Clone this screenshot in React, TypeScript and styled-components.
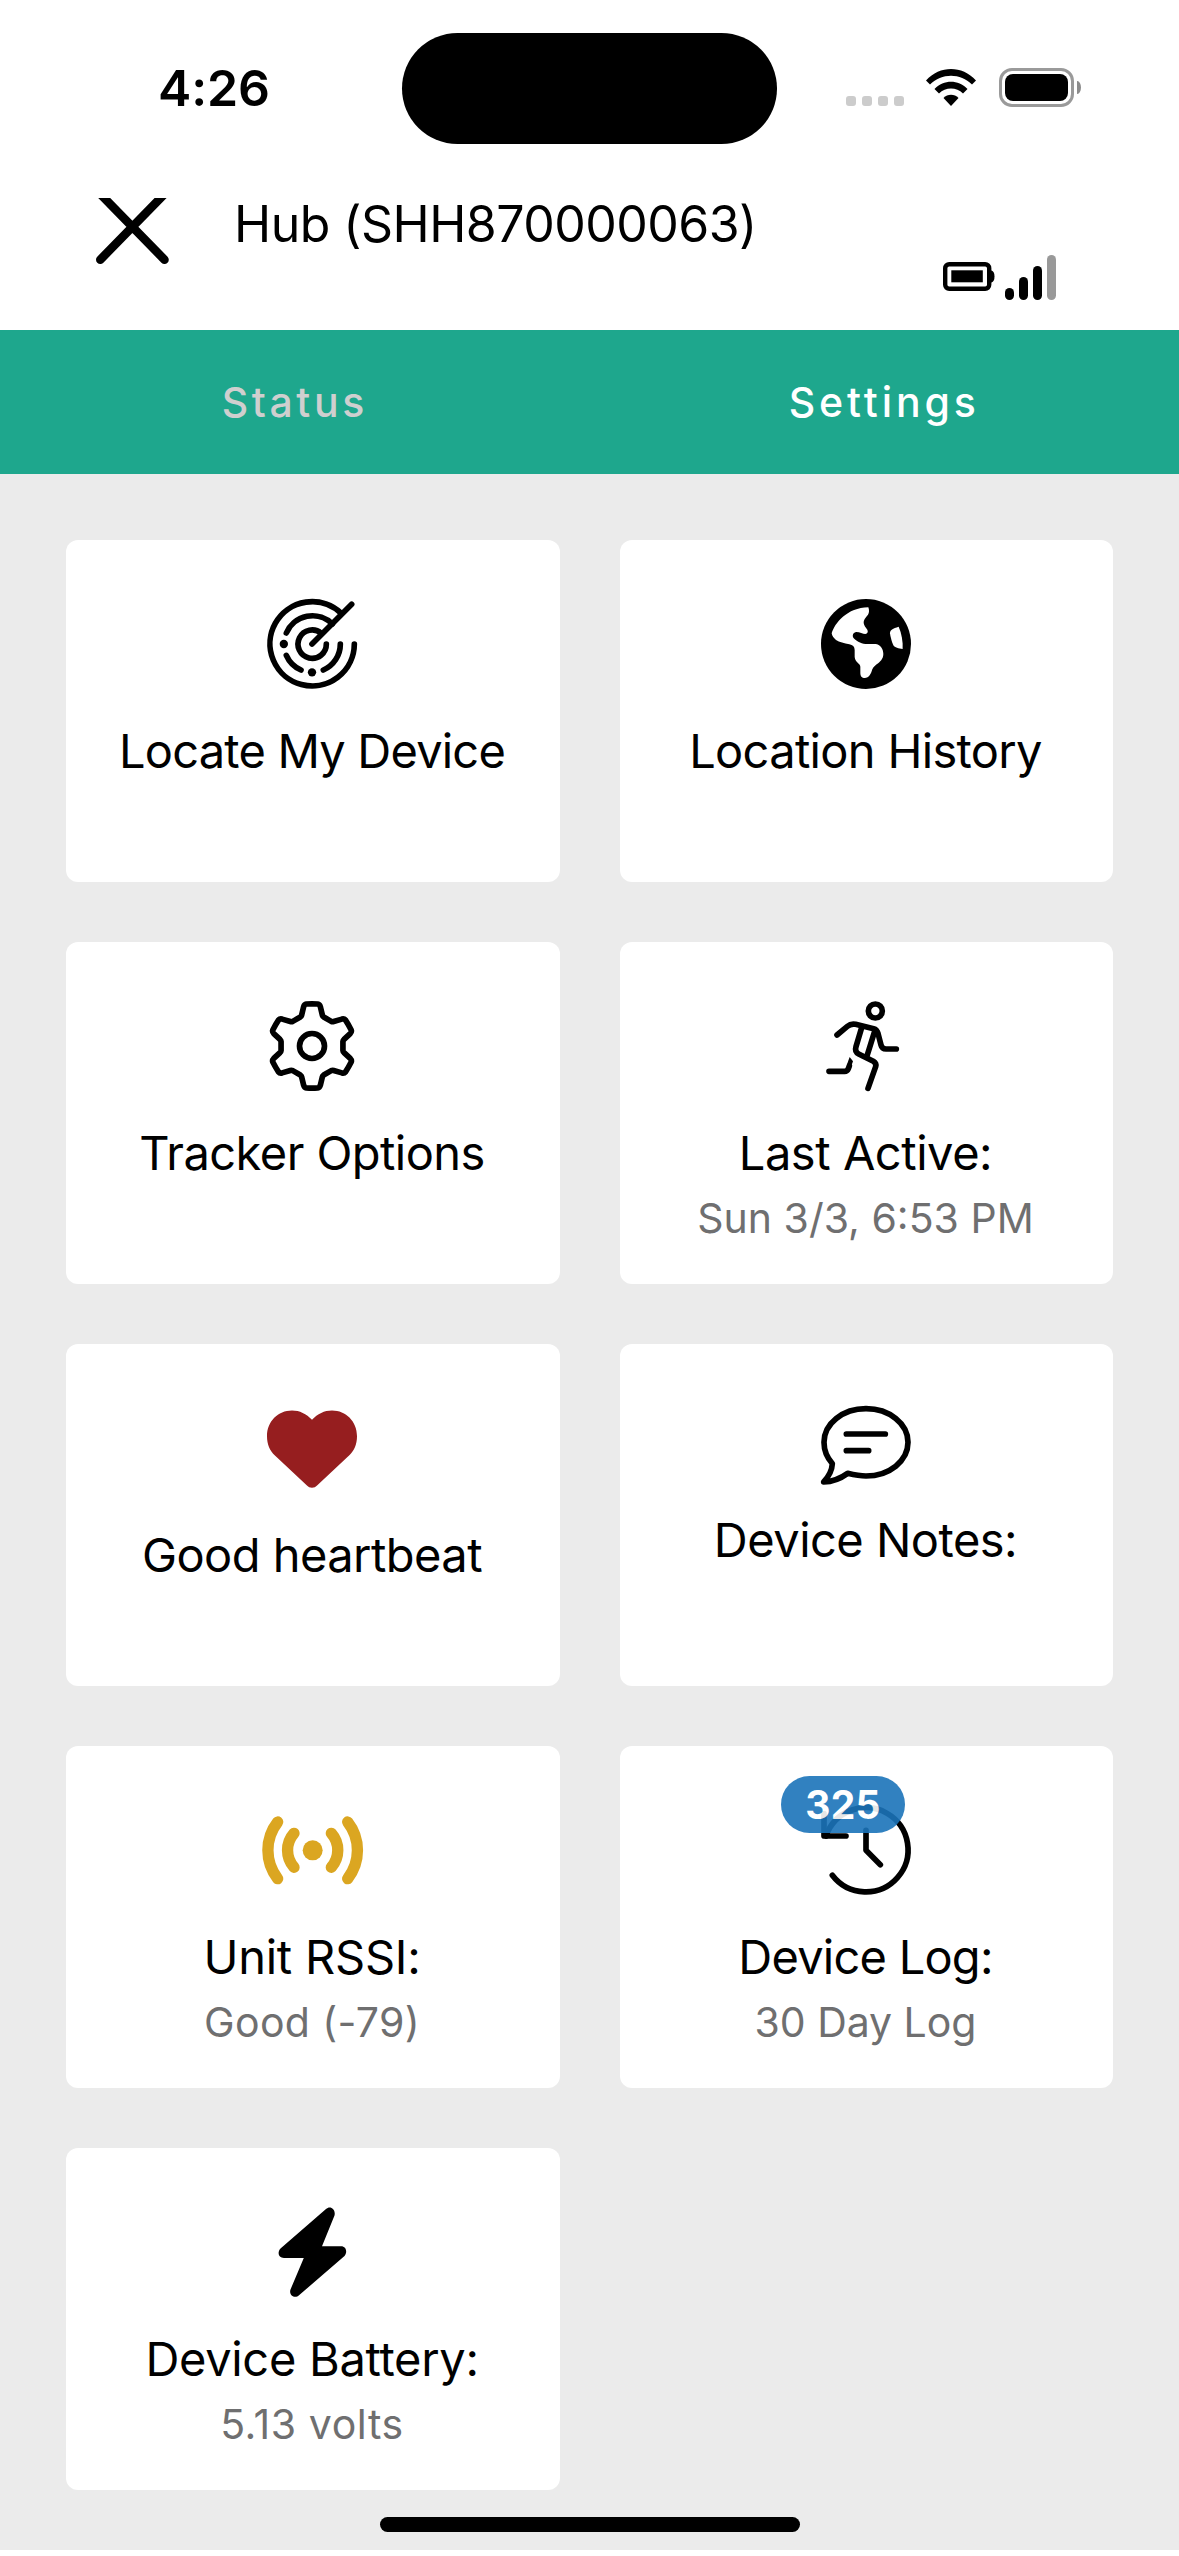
import React from "react";
import styled, { createGlobalStyle } from "styled-components";

const GlobalStyle = createGlobalStyle`
  *, *::before, *::after { box-sizing: border-box; }
  body { margin: 0; background: #fff; }
`;

const Screen = styled.div`
  display: flex;
  flex-direction: column;
  width: 1179px;
  height: 2556px;
  overflow: hidden;
  background: #fff;
  color: #000;
  font-family: Inter, "Liberation Sans", sans-serif;
`;

/* ---------- system status bar ---------- */

const StatusBar = styled.div`
  display: grid;
  grid-template-columns: 402px 375px 402px;
  flex: none;
  height: 177px;
`;

const Clock = styled.div`
  padding: 58px 0 0 158px;
  font-size: 50px;
  font-weight: 600;
  line-height: 60px;
  letter-spacing: -0.17px;
`;

const Island = styled.div`
  height: 111px;
  margin-top: 33px;
  border-radius: 56px;
  background: #000;
`;

const SystemIcons = styled.div`
  display: flex;
  align-items: flex-end;
  height: 107px;
  padding-left: 69px;
`;

const CellDots = styled.div`
  display: flex;
  gap: 6px;
  margin: 0 22px 1px 0;
`;

const CellDot = styled.span`
  width: 10px;
  height: 10px;
  border-radius: 3px;
  background: #ccc;
`;

const WifiSvg = styled.svg`
  display: block;
  margin: 0 23px 1px 0;
`;

const PhoneBattery = styled.div`
  width: 75px;
  height: 39px;
  padding: 3px;
  border: 3px solid #9a9a9a;
  border-radius: 13px;
`;

const PhoneBatteryLevel = styled.div`
  height: 27px;
  border-radius: 8px;
  background: #000;
`;

const PhoneBatteryNub = styled.div`
  width: 4px;
  height: 13px;
  margin: 0 0 13px 3px;
  border-radius: 0 4px 4px 0 / 0 7px 7px 0;
  background: #8c8c8c;
`;

/* ---------- app header ---------- */

const Header = styled.header`
  display: flex;
  align-items: flex-start;
  flex: none;
  height: 153px;
  padding: 0 123px 0 96px;
`;

const CloseButton = styled.button`
  width: 73px;
  height: 66px;
  margin: 21px 65px 0 0;
  padding: 0;
  border: 0;
  background: none;
`;

const HeaderTitle = styled.h1`
  margin: 17px 0 0;
  font-size: 50px;
  font-weight: 400;
  line-height: 60px;
  letter-spacing: -0.53px;
`;

const DeviceIndicators = styled.div`
  display: flex;
  align-items: flex-end;
  gap: 10px;
  height: 45px;
  margin: 78px 0 0 auto;
`;

const BatterySvg = styled.svg`
  display: block;
  margin-bottom: 9px;
`;

const SignalBars = styled.div`
  display: flex;
  align-items: flex-end;
  gap: 5px;
`;

const SignalBar = styled.span<{ $height: number; $off?: boolean }>`
  width: 9px;
  height: ${(p) => p.$height}px;
  border-radius: 4.5px;
  background: ${(p) => (p.$off ? "#999" : "#000")};
`;

/* ---------- tabs ---------- */

const Tabs = styled.nav`
  display: grid;
  grid-template-columns: 1fr 1fr;
  flex: none;
  height: 144px;
  background: #1ea78d;
`;

const Tab = styled.button<{ $active?: boolean; $tracking: number }>`
  padding: 0;
  border: 0;
  background: none;
  color: ${(p) => (p.$active ? "#fff" : "#cfcfcf")};
  font-family: inherit;
  font-size: 41px;
  font-weight: 500;
  line-height: 58px;
  letter-spacing: ${(p) => p.$tracking}px;
`;

/* ---------- tiles ---------- */

const Content = styled.main`
  display: flex;
  flex-direction: column;
  align-items: center;
  flex: none;
  height: 2076px;
  padding-top: 66px;
  background: #ebebeb;
`;

const TileGrid = styled.div`
  display: grid;
  grid-template-columns: 494px 493px;
  grid-auto-rows: 342px;
  gap: 60px;
  width: 1047px;
`;

const TileCard = styled.section`
  display: flex;
  flex-direction: column;
  align-items: center;
  padding: 59px 2px 0 0;
  border-radius: 12px;
  background: #fff;
`;

const IconSlot = styled.div<{ $height: number }>`
  position: relative;
  align-self: flex-start;
  display: flex;
  width: 90px;
  height: ${(p) => p.$height}px;
  margin: 0 0 33px 201px;
`;

const TileSvg = styled.svg`
  display: block;
  flex: none;
  width: 90px;
  height: 90px;
  overflow: visible;
`;

const TileTitle = styled.h2<{ $tracking: number }>`
  margin: 0;
  font-size: 47px;
  font-weight: 400;
  line-height: 58px;
  letter-spacing: ${(p) => p.$tracking}px;
  white-space: nowrap;
`;

const TileDetail = styled.p<{ $tracking: number }>`
  margin: 11px 0 0;
  color: #6f6f70;
  font-size: 41px;
  line-height: 50px;
  letter-spacing: ${(p) => p.$tracking}px;
  white-space: nowrap;
`;

const CountBadge = styled.span`
  position: absolute;
  top: -29px;
  left: -40px;
  width: 124px;
  height: 57px;
  border-radius: 29px;
  background: #1b74ba;
  color: #fff;
  font-size: 39px;
  font-weight: 700;
  line-height: 57px;
  letter-spacing: 0.2px;
  text-align: center;
  opacity: 0.9;
`;

const HomeIndicator = styled.div`
  width: 420px;
  height: 15px;
  margin-top: 27px;
  border-radius: 8px;
  background: #000;
`;

/* ---------- icons, drawn on a 270-unit square ---------- */

const line = {
  fill: "none",
  stroke: "#000",
  strokeWidth: 17,
  strokeLinecap: "round" as const,
  strokeLinejoin: "round" as const,
};

const RadarIcon = () => (
  <TileSvg viewBox="0 0 270 270">
    <g {...line}>
      <path d="M262 135A126.5 126.5 0 1 1 223 43" />
      <path d="M220 135A85 85 0 0 1 169 213" />
      <path d="M102 213A85 85 0 0 1 58 169" />
      <path d="M58 102A85 85 0 0 1 196 75" />
      <path d="M178 135A42.5 42.5 0 1 1 163 103" />
      <path d="M135 135L254 16" />
    </g>
    <circle cx="50.5" cy="135" r="12.5" />
    <circle cx="135" cy="220" r="12.5" />
  </TileSvg>
);

const GlobeIcon = () => (
  <TileSvg viewBox="0 0 270 270">
    <circle cx="135" cy="135" r="135" />
    <path
      fill="#fff"
      d="M142 25C145 32 145 42 141 47C133 57 127 63 128 72C129 80 134 85 139 92C142 98 140 104 133 105C126 105 116 99 106 99C97 100 93 109 97 116C103 124 119 133 133 135H163C178 136 187 150 187 165C187 180 177 189 167 196C158 203 154 208 152 217C148 230 140 237 132 237C122 237 118 231 118 221V203C118 193 103 191 101 174V153C101 143 95 138 85 136C70 132 55 130 45 123C39 118 33 112 32 103C42 72 78 26 142 25Z"
    />
    <path
      fill="#fff"
      d="M233 83C242 103 246 128 245 150C233 149 221 146 217 139C212 128 208 113 207 103C206 93 216 88 233 83Z"
    />
  </TileSvg>
);

/* One cog tooth, relative to the centre of the wheel; repeated every 60 degrees. */
const TOOTH: Array<[string, ...number[][]]> = [
  ["L", [-35, -87]],
  ["Q", [-32, -89], [-31, -93]],
  ["L", [-25, -118]],
  ["Q", [-23, -125], [-17, -126]],
  ["Q", [0, -127], [17, -126]],
  ["Q", [23, -125], [25, -118]],
  ["L", [31, -93]],
  ["Q", [32, -89], [35, -87]],
];

const cogPath = () => {
  const parts: string[] = [];
  for (let i = 0; i < 6; i += 1) {
    const a = (i * Math.PI) / 3;
    TOOTH.forEach(([cmd, ...points], n) => {
      const coords = points.map(([x, y]) =>
        [135 + x * Math.cos(a) - y * Math.sin(a), 135 + x * Math.sin(a) + y * Math.cos(a)]
          .map((v) => v.toFixed(1))
          .join(" ")
      );
      parts.push((i === 0 && n === 0 ? "M" : cmd) + coords.join(" "));
    });
  }
  return `${parts.join("")}Z`;
};

const CogIcon = () => (
  <TileSvg viewBox="0 0 270 270">
    <path {...line} d={cogPath()} />
    <circle {...line} cx="135" cy="135" r="37.5" />
  </TileSvg>
);

const RunnerIcon = () => (
  <TileSvg viewBox="0 0 270 270">
    <g {...line}>
      <circle cx="163" cy="30" r="21" />
      <path d="M48 102L79 76C86 70 94 68 104 70L158 83C166 85 169 90 171 97L180 132C182 140 187 144 195 144H226" />
      <path d="M122 80L105 137C102 147 105 155 113 159L157 181C164 185 166 190 164 197L141 262" />
      <path d="M160 94L137 168" />
      <path d="M24 211H71C77 211 80 208 82 203L85 195" />
    </g>
    <path d="M77 193L86 168L96 181L90 197Z" />
  </TileSvg>
);

const HeartIcon = () => (
  <TileSvg viewBox="0 -2.5 270 270">
    <path
      fill="#961e1f"
      d="M135 48C118 30 98 20 75 20C33 20 0 53 0 97C0 121 9 141 23 154L119 244C128 254 142 254 151 244L247 154C261 141 270 121 270 97C270 53 237 20 195 20C172 20 152 30 135 48Z"
    />
  </TileSvg>
);

const ChatIcon = () => (
  <TileSvg viewBox="0 -8 270 270">
    <g {...line}>
      <path d="M34 174C18 156 9 134 9 110C9 54 65 9 135 9S261 54 261 110S205 211 135 211C115 211 97 207 80 203C62 216 36 228 8 229C22 214 33 196 34 174Z" />
      <path d="M76 85H193M76 135H143" />
    </g>
  </TileSvg>
);

const SignalIcon = () => (
  <TileSvg viewBox="15 0 270 270">
    <g fill="none" stroke="#dba621" strokeWidth="34" strokeLinecap="round">
      <path d="M47 51A138 138 0 0 0 47 221" />
      <path d="M96 85A77 77 0 0 0 96 187" />
      <path d="M208 85A77 77 0 0 1 208 187" />
      <path d="M257 51A138 138 0 0 1 257 221" />
    </g>
    <circle cx="152" cy="136" r="30" fill="#dba621" />
  </TileSvg>
);

const HistoryIcon = () => (
  <TileSvg viewBox="0 0 270 270">
    <g {...line}>
      <path d="M34 211A126.5 126.5 0 1 0 15 93" />
      <path d="M9 26V93H75" />
      <path d="M135 76V136L178 179" />
    </g>
  </TileSvg>
);

const BoltIcon = () => (
  <TileSvg viewBox="0 0 90 90">
    <path d="M59 2C63 -2 69 2 67.500 8.500L55 39.300H74C79.500 39.300 80.500 45.500 77.500 49L32 88.300C28 92 21.500 88.500 23.500 82.500L36.800 51H17C11.500 51 10 45.500 13.500 41.500Z" />
  </TileSvg>
);

const WifiIcon = () => (
  <WifiSvg width="50" height="37" viewBox="0 0 50 37">
    <path d="M0 11.500C14 -3.800 36 -3.800 50 11.500L46 15.600C34.500 3.800 15.500 3.800 4 15.600Z" />
    <path d="M8.500 20C18 10.300 32 10.300 41.500 20L37 24.600C30.500 17.800 19.500 17.800 13 24.600Z" />
    <path d="M17.500 29C21.500 24.600 28.500 24.600 32.500 29L25 37Z" />
  </WifiSvg>
);

const DeviceBatteryIcon = () => (
  <BatterySvg width="52" height="29" viewBox="0 0 52 29">
    <rect x="2.200" y="2.200" width="44" height="24.600" rx="4" fill="none" stroke="#000" strokeWidth="4.400" />
    <rect x="8.300" y="8.300" width="31.500" height="12" />
    <path d="M47 8.500H48.500Q51.500 9.500 51.500 14.500T48.500 20.500H47Z" />
  </BatterySvg>
);

/* ---------- content ---------- */

interface TileData {
  icon: () => React.ReactElement;
  title: string;
  tracking: number;
  detail?: string;
  detailTracking?: number;
  slot?: number;
  count?: number;
}

const tiles: TileData[] = [
  { icon: RadarIcon, title: "Locate My Device", tracking: -0.8 },
  { icon: GlobeIcon, title: "Location History", tracking: -0.67 },
  { icon: CogIcon, title: "Tracker Options", tracking: -0.56 },
  { icon: RunnerIcon, title: "Last Active:", tracking: -0.45, detail: "Sun 3/3, 6:53 PM", detailTracking: 0 },
  { icon: HeartIcon, title: "Good heartbeat", tracking: -0.54 },
  { icon: ChatIcon, title: "Device Notes:", tracking: -0.51, slot: 75 },
  { icon: SignalIcon, title: "Unit RSSI:", tracking: -0.24, detail: "Good (-79)", detailTracking: 0.35 },
  { icon: HistoryIcon, title: "Device Log:", tracking: -0.76, detail: "30 Day Log", detailTracking: -0.04, count: 325 },
  { icon: BoltIcon, title: "Device Battery:", tracking: -0.3, detail: "5.13 volts", detailTracking: 0.6 },
];

const Tile = ({ icon: Icon, title, tracking, detail, detailTracking = 0, slot = 90, count }: TileData) => (
  <TileCard>
    <IconSlot $height={slot}>
      <Icon />
      {count !== undefined && <CountBadge>{count}</CountBadge>}
    </IconSlot>
    <TileTitle $tracking={tracking}>{title}</TileTitle>
    {detail && <TileDetail $tracking={detailTracking}>{detail}</TileDetail>}
  </TileCard>
);

export default function App() {
  return (
    <Screen>
      <GlobalStyle />
      <StatusBar>
        <Clock>4:26</Clock>
        <Island />
        <SystemIcons>
          <CellDots>
            <CellDot />
            <CellDot />
            <CellDot />
            <CellDot />
          </CellDots>
          <WifiIcon />
          <PhoneBattery>
            <PhoneBatteryLevel />
          </PhoneBattery>
          <PhoneBatteryNub />
        </SystemIcons>
      </StatusBar>
      <Header>
        <CloseButton aria-label="Close">
          <svg width="73" height="66" viewBox="0 0 73 66" display="block">
            <path d="M4.300 61.700L68.500 -4M68.500 61.700L4.300 -4" stroke="#000" strokeWidth="8.600" strokeLinecap="round" />
          </svg>
        </CloseButton>
        <HeaderTitle>Hub (SHH870000063)</HeaderTitle>
        <DeviceIndicators>
          <DeviceBatteryIcon />
          <SignalBars>
            <SignalBar $height={12} />
            <SignalBar $height={23} />
            <SignalBar $height={34} />
            <SignalBar $height={45} $off />
          </SignalBars>
        </DeviceIndicators>
      </Header>
      <Tabs>
        <Tab $tracking={3.6}>Status</Tab>
        <Tab $active $tracking={3.9}>Settings</Tab>
      </Tabs>
      <Content>
        <TileGrid>
          {tiles.map((tile) => (
            <Tile key={tile.title} {...tile} />
          ))}
        </TileGrid>
        <HomeIndicator />
      </Content>
    </Screen>
  );
}
